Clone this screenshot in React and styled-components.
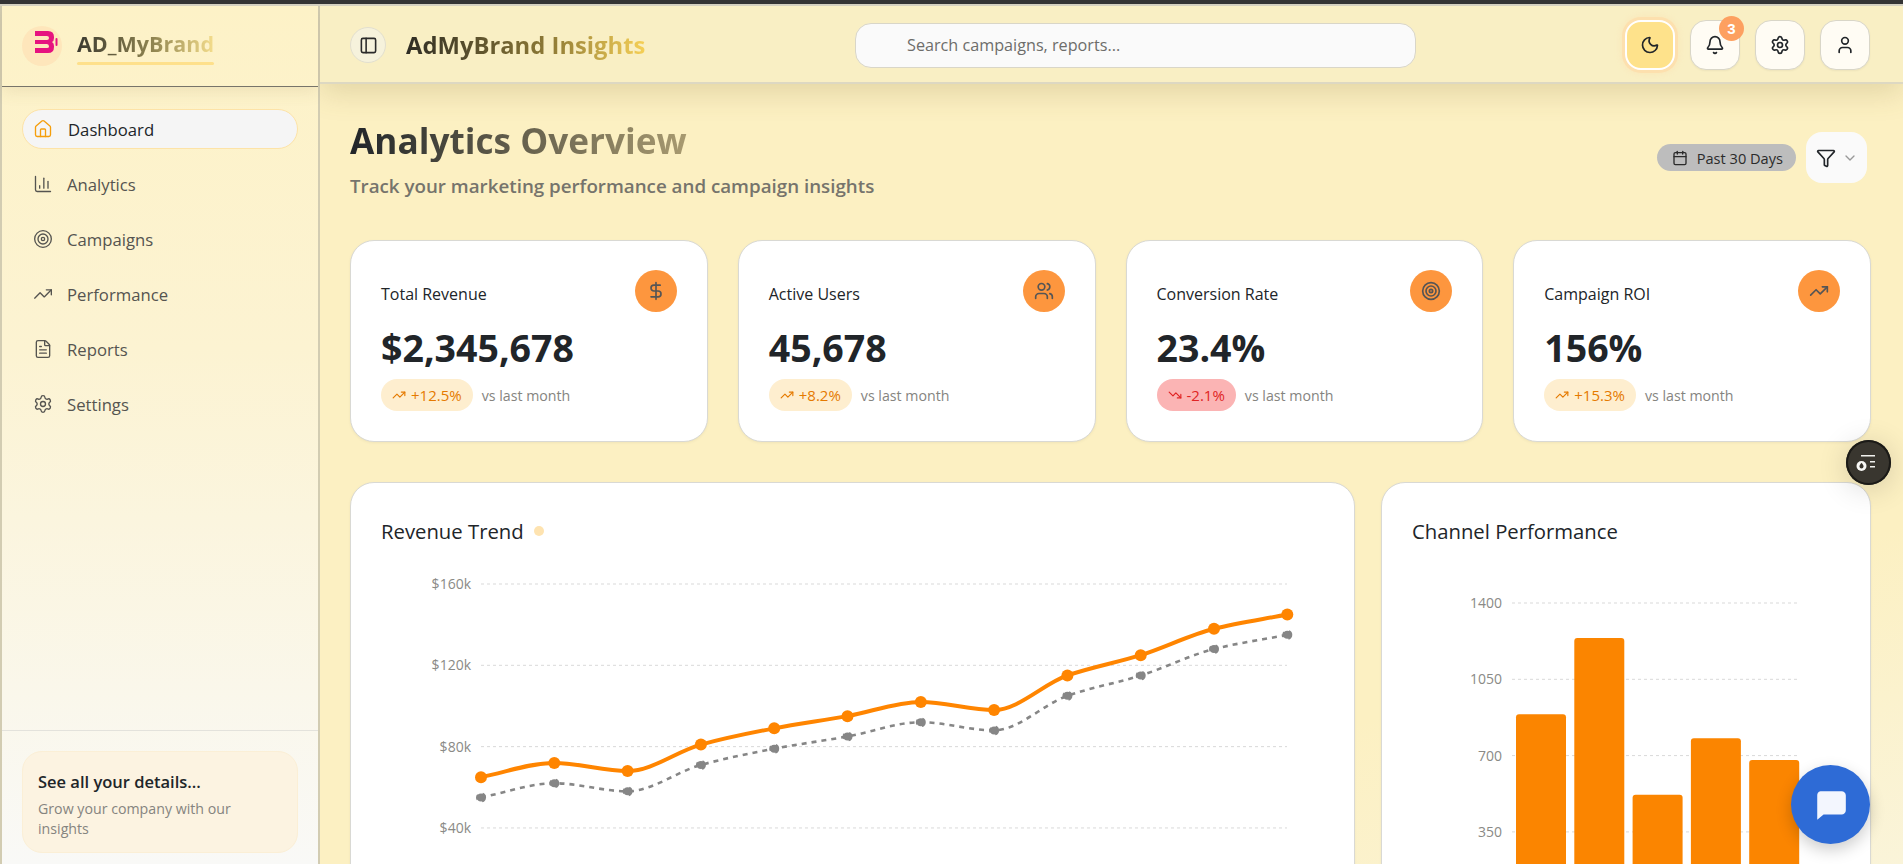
import React from 'react';
import styled, { createGlobalStyle } from 'styled-components';
import {
  Home, BarChart3, Target, TrendingUp, TrendingDown, FileText, Settings, PanelLeft, Moon, Bell,
  User, Calendar, Filter, ChevronDown, DollarSign, Users,
} from 'lucide-react';

const GlobalStyle = createGlobalStyle`
  html, body { margin: 0; padding: 0; height: 100%; overflow: hidden; }
  * { box-sizing: border-box; }
  body { font-family: "Open Sans", "Noto Sans", "Liberation Sans", sans-serif; color: #212529; background: #fcf0c2; }
`;

const TopEdge = styled.div`
  height: 6px;
  background: #343434;
  border-bottom: 2px solid #d4d0c0;
`;

const Shell = styled.div`
  display: flex;
  height: 858px;
  overflow: hidden;
`;

const Sidebar = styled.aside`
  width: 320px;
  flex: none;
  display: flex;
  flex-direction: column;
  border-left: 2px solid #d2ccb2;
  border-right: 2px solid #d2ccb2;
  background: linear-gradient(180deg, #fdf2c7 0%, #fcf3d2 40%, #f9f9f7 100%);
`;

const Brand = styled.div`
  height: 81px;
  flex: none;
  display: flex;
  align-items: center;
  gap: 15px;
  padding: 0 20px;
  border-bottom: 1px solid #77746a;
  box-shadow: 0 4px 16px rgba(120, 100, 40, 0.12);
`;

const LogoMark = styled.div`
  width: 40px;
  height: 40px;
  border-radius: 50%;
  background: #fee6bb;
  display: flex;
  align-items: center;
  justify-content: center;
  overflow: hidden;
`;

const BrandName = styled.div`
  font-size: 21.5px;
  font-weight: 700;
  line-height: 28px;
  padding-bottom: 4px;
  position: relative;
  background: linear-gradient(90deg, #3b3a30 0%, #8f8450 55%, #f4dd8c 100%);
  -webkit-background-clip: text;
  background-clip: text;
  color: transparent;
  &::after {
    content: '';
    position: absolute;
    left: 0;
    right: 0;
    bottom: -3px;
    height: 3px;
    border-radius: 2px;
    background: #fee08b;
  }
`;

const Nav = styled.nav`
  flex: 1;
  display: flex;
  flex-direction: column;
  gap: 15px;
  padding: 22px 20px 0 20px;
`;

const NavItem = styled.a`
  height: 40px;
  display: flex;
  align-items: center;
  gap: ${p => (p.$active ? '15px' : '14px')};
  padding: 0 10px;
  font-size: 16.7px;
  border-radius: 20px;
  color: ${p => (p.$active ? '#212529' : '#555450')};
  background: ${p => (p.$active ? '#f5f5f5' : 'transparent')};
  border: 1px solid ${p => (p.$active ? '#fde3a7' : 'transparent')};
  font-weight: ${p => (p.$active ? 500 : 400)};
  svg { color: ${p => (p.$active ? '#f59e0b' : '#555450')}; flex: none; }
`;

const SideFooter = styled.div`
  flex: none;
  height: 134px;
  border-top: 1px solid #e3e2dc;
  padding: 20px;
`;

const PromoCard = styled.div`
  height: 102px;
  border-radius: 20px;
  padding: 19px 15px;
  background: #fcf3e1;
  border: 1px solid #fbefd6;
`;

const PromoTitle = styled.div`
  font-size: 16.5px;
  font-weight: 600;
  line-height: 22px;
  color: #212529;
`;

const PromoText = styled.div`
  font-size: 14.2px;
  line-height: 20px;
  margin-top: 6px;
  color: #85847f;
`;

const Content = styled.div`
  flex: 1;
  min-width: 0;
  display: flex;
  flex-direction: column;
  overflow: hidden;
`;

const Header = styled.header`
  height: 78px;
  flex: none;
  display: flex;
  align-items: center;
  padding: 2px 33px 0 30px;
  background: #f9efc4;
  border-bottom: 2px solid #ddd8c2;
  box-shadow: 0 8px 30px rgba(120, 100, 40, 0.2);
  position: relative;
`;

const ToggleButton = styled.button`
  width: 36px;
  height: 36px;
  border-radius: 50%;
  border: 1px solid #e2dfcf;
  background: #f6f2dc;
  display: flex;
  align-items: center;
  justify-content: center;
  padding: 0;
  color: #2b2b2b;
`;

const HeaderTitle = styled.h1`
  margin: 0 0 0 20px;
  width: 449px;
  font-size: 23.8px;
  font-weight: 700;
`;

const TitleText = styled.span`
  display: inline-block;
  background: linear-gradient(90deg, #2e2c24 0%, #8e7a36 60%, #f6d056 100%);
  -webkit-background-clip: text;
  background-clip: text;
  color: transparent;
`;

const SearchBox = styled.div`
  width: 561px;
  height: 45px;
  border-radius: 16px;
  border: 1px solid #d9d6c8;
  background: #fafafa;
  padding-left: 51px;
  display: flex;
  align-items: center;
  font-size: 16.2px;
  color: #6d6d6a;
`;

const HeaderActions = styled.div`
  margin-left: auto;
  display: flex;
  align-items: center;
  gap: 15px;
`;

const IconButton = styled.button`
  position: relative;
  width: 50px;
  height: 50px;
  border-radius: 16px;
  display: flex;
  align-items: center;
  justify-content: center;
  padding: 0;
  color: #212529;
  border: ${p => (p.$accent ? '2px solid #fff' : '1px solid #d9d6c8')};
  background: ${p => (p.$accent ? '#fee28b' : '#fffcf4')};
  box-shadow: ${p => (p.$accent ? '0 0 0 3px #fde0ae, 0 0 6px 3px rgba(253,224,174,0.6)' : '0 1px 2px rgba(0,0,0,0.05)')};
`;

const Badge = styled.span`
  position: absolute;
  top: -5px;
  right: -5px;
  width: 25px;
  height: 25px;
  border-radius: 50%;
  background: #fda060;
  color: #fff;
  font-size: 15px;
  font-weight: 700;
  display: flex;
  align-items: center;
  justify-content: center;
`;

const Main = styled.main`
  flex: 1;
  overflow: hidden;
  padding: 30px 32px 0 30px;
  background: linear-gradient(160deg, #fcf0c2 75%, #faf4d9 100%);
`;

const PageHead = styled.div`
  display: flex;
  justify-content: space-between;
  align-items: flex-start;
  height: 86px;
`;

const PageTitle = styled.h2`
  margin: 4px 0 0;
  font-size: 35.2px;
  font-weight: 700;
  line-height: 44px;
  width: max-content;
  background: linear-gradient(90deg, #212529 0%, #a89a70 100%);
  -webkit-background-clip: text;
  background-clip: text;
  color: transparent;
`;

const PageSub = styled.p`
  margin: 11px 0 0;
  font-size: 18.75px;
  line-height: 26px;
  font-weight: 600;
  color: #76746c;
`;

const HeadActions = styled.div`
  display: flex;
  align-items: center;
  gap: 10px;
  margin: 18px 4px 0 0;
`;

const RangePill = styled.div`
  height: 27px;
  display: flex;
  align-items: center;
  gap: 9px;
  padding: 0 13px 0 15px;
  border-radius: 14px;
  background: #bdbdbd;
  font-size: 14.6px;
  font-weight: 500;
  color: #2b2b2b;
`;

const FilterButton = styled.button`
  width: 61px;
  height: 51px;
  border-radius: 16px;
  border: none;
  background: #fafafa;
  display: flex;
  align-items: center;
  justify-content: center;
  gap: 6px;
  padding: 0;
  color: #212529;
`;

const StatGrid = styled.section`
  display: grid;
  grid-template-columns: repeat(4, 1fr);
  gap: 30px;
  margin-top: 40px;
`;

const Card = styled.div`
  background: #fff;
  border: 1px solid #d9d9d4;
  border-radius: 24px;
  box-shadow: 0 1px 3px rgba(0, 0, 0, 0.05);
`;

const StatCard = styled(Card)`
  height: 202px;
  padding: 30px;
`;

const StatTop = styled.div`
  display: flex;
  justify-content: space-between;
  align-items: center;
  margin-top: -1px;
`;

const StatLabel = styled.div`
  font-size: 16px;
  font-weight: 500;
  margin-top: 5px;
  color: #212529;
`;

const StatIcon = styled.div`
  width: 42px;
  height: 42px;
  border-radius: 50%;
  background: #fd963e;
  display: flex;
  align-items: center;
  justify-content: center;
  color: #555;
`;

const StatValue = styled.div`
  margin-top: 10px;
  font-size: 37.5px;
  font-weight: 700;
  line-height: 52px;
  color: #212529;
`;

const StatFoot = styled.div`
  margin-top: 5px;
  display: flex;
  align-items: center;
  gap: 9px;
  font-size: 14.2px;
  color: #85847f;
`;

const Change = styled.span`
  height: 32px;
  display: inline-flex;
  align-items: center;
  gap: 5px;
  padding: 0 11px;
  border-radius: 16px;
  font-size: 15px;
  background: ${p => (p.$down ? '#fbb4b4' : '#feeecf')};
  color: ${p => (p.$down ? '#e02424' : '#e57a00')};
`;

const ChartGrid = styled.section`
  display: grid;
  grid-template-columns: 1005px minmax(0, 1fr);
  gap: 26px;
  margin-top: 40px;
`;

const ChartCard = styled(Card)`
  height: 520px;
  padding: 38px 30px 30px;
`;

const ChartTitle = styled.h3`
  margin: 0;
  font-size: 20.3px;
  font-weight: 500;
  line-height: 20px;
  display: flex;
  align-items: center;
  gap: 10px;
  color: #212529;
`;

const LiveDot = styled.span`
  width: 10px;
  height: 10px;
  border-radius: 50%;
  background: #fee3b0;
`;

const ChartSvg = styled.svg`
  display: block;
  margin-left: -30px;
  overflow: visible;
`;

const ToolDot = styled.button`
  position: fixed;
  top: 440px;
  right: 12px;
  width: 45px;
  height: 45px;
  border-radius: 50%;
  border: none;
  background: #39362f;
  display: flex;
  align-items: center;
  justify-content: center;
  padding: 0;
  box-shadow: inset 0 0 0 2px #1b1a17, 0 4px 30px rgba(0, 0, 0, 0.16);
`;

const ChatButton = styled.button`
  position: fixed;
  top: 765px;
  right: 33px;
  width: 79px;
  height: 79px;
  border-radius: 50%;
  border: none;
  background: #2e6bd6;
  display: flex;
  align-items: center;
  justify-content: center;
  padding: 0;
  box-shadow: 0 6px 16px rgba(0, 0, 0, 0.2);
`;

const navItems = [
  { label: 'Dashboard', icon: Home, active: true },
  { label: 'Analytics', icon: BarChart3 },
  { label: 'Campaigns', icon: Target },
  { label: 'Performance', icon: TrendingUp },
  { label: 'Reports', icon: FileText },
  { label: 'Settings', icon: Settings },
];

const stats = [
  { label: 'Total Revenue', value: '$2,345,678', change: '+12.5%', icon: DollarSign },
  { label: 'Active Users', value: '45,678', change: '+8.2%', icon: Users },
  { label: 'Conversion Rate', value: '23.4%', change: '-2.1%', icon: Target, down: true },
  { label: 'Campaign ROI', value: '156%', change: '+15.3%', icon: TrendingUp },
];

const revenue = [65, 72, 68, 81, 89, 95, 102, 98, 115, 125, 138, 145];
const channels = [890, 1240, 520, 780, 680];

// same curve as a monotone line chart
function monotonePath(pts) {
  const n = pts.length;
  const dx = [], m = [], t = [];
  for (let i = 0; i < n - 1; i++) {
    dx[i] = pts[i + 1][0] - pts[i][0];
    m[i] = (pts[i + 1][1] - pts[i][1]) / dx[i];
  }
  t[0] = m[0];
  t[n - 1] = m[n - 2];
  for (let i = 1; i < n - 1; i++) {
    t[i] = m[i - 1] * m[i] <= 0 ? 0 : (2 * m[i - 1] * m[i]) / (m[i - 1] + m[i]);
  }
  let d = `M${pts[0][0]},${pts[0][1]}`;
  for (let i = 0; i < n - 1; i++) {
    const h = dx[i] / 3;
    d += `C${pts[i][0] + h},${pts[i][1] + h * t[i]} ${pts[i + 1][0] - h},${pts[i + 1][1] - h * t[i + 1]} ${pts[i + 1][0]},${pts[i + 1][1]}`;
  }
  return d;
}

const axisText = { fontSize: 14, fill: '#8a8a86', textAnchor: 'end' };

function RevenueChart() {
  const x = i => 130 + i * 73.3;
  const y = v => 43 + (160 - v) * 2.033;
  const main = revenue.map((v, i) => [x(i), y(v)]);
  const prev = revenue.map((v, i) => [x(i), y(v - 10)]);
  return (
    <ChartSvg width="940" height="400">
      {[160, 120, 80, 40].map(v => (
        <g key={v}>
          <line x1="130" x2="936" y1={y(v)} y2={y(v)} stroke="#d9d9d9" strokeDasharray="3 3" />
          <text x="120" y={y(v) + 5} style={axisText}>${v}k</text>
        </g>
      ))}
      <path d={monotonePath(prev)} fill="none" stroke="#868686" strokeWidth="2.6" strokeDasharray="5 5" />
      {prev.map(([cx, cy]) => (
        <circle key={cx} cx={cx} cy={cy} r="4" fill="#868686" stroke="#868686" strokeWidth="2" strokeDasharray="5 5" />
      ))}
      <path d={monotonePath(main)} fill="none" stroke="#ff8500" strokeWidth="4" />
      {main.map(([cx, cy]) => (
        <circle key={cx} cx={cx} cy={cy} r="6" fill="#ff8500" />
      ))}
    </ChartSvg>
  );
}

function ChannelChart() {
  const y = v => 62 + (1400 - v) * 0.218;
  return (
    <ChartSvg width="430" height="400">
      {[1400, 1050, 700, 350].map(v => (
        <g key={v}>
          <line x1="130" x2="418" y1={y(v)} y2={y(v)} stroke="#d9d9d9" strokeDasharray="3 3" />
          <text x="120" y={y(v) + 5} style={axisText}>{v}</text>
        </g>
      ))}
      {channels.map((v, i) => (
        <path
          key={v}
          d={`M${134 + i * 58.3},${y(0)}V${y(v) + 3}q0,-3 3,-3h44q3,0 3,3V${y(0)}z`}
          fill="#fb8500"
        />
      ))}
    </ChartSvg>
  );
}

export default function App() {
  return (
    <>
      <GlobalStyle />
      <TopEdge />
      <Shell>
        <Sidebar>
          <Brand>
            <LogoMark>
              <svg width="40" height="40" viewBox="0 0 40 40">
                <path d="M13 5H26Q32 5 32 11V12Q32 15 30 16Q32 17 32 20V21Q32 27 26 27H13V22H25Q27 22 27 20.5Q27 18 25 18H13V14H25Q27 14 27 12Q27 10 25 10H13Z" fill="#e6127f" />
                <rect x="33.5" y="12" width="2" height="8" rx="1" fill="#e6127f" />
              </svg>
            </LogoMark>
            <BrandName>AD_MyBrand</BrandName>
          </Brand>
          <Nav>
            {navItems.map(({ label, icon: Icon, active }) => (
              <NavItem key={label} $active={active}>
                <Icon size={20} strokeWidth={1.6} />
                {label}
              </NavItem>
            ))}
          </Nav>
          <SideFooter>
            <PromoCard>
              <PromoTitle>See all your details...</PromoTitle>
              <PromoText>Grow your company with our insights</PromoText>
            </PromoCard>
          </SideFooter>
        </Sidebar>
        <Content>
          <Header>
            <ToggleButton><PanelLeft size={19} /></ToggleButton>
            <HeaderTitle><TitleText>AdMyBrand Insights</TitleText></HeaderTitle>
            <SearchBox>Search campaigns, reports...</SearchBox>
            <HeaderActions>
              <IconButton $accent><Moon size={20} /></IconButton>
              <IconButton>
                <Bell size={20} />
                <Badge>3</Badge>
              </IconButton>
              <IconButton><Settings size={20} /></IconButton>
              <IconButton><User size={20} /></IconButton>
            </HeaderActions>
          </Header>
          <Main>
            <PageHead>
              <div>
                <PageTitle>Analytics Overview</PageTitle>
                <PageSub>Track your marketing performance and campaign insights</PageSub>
              </div>
              <HeadActions>
                <RangePill><Calendar size={16} />Past 30 Days</RangePill>
                <FilterButton>
                  <Filter size={20} />
                  <ChevronDown size={16} color="#999" />
                </FilterButton>
              </HeadActions>
            </PageHead>
            <StatGrid>
              {stats.map(({ label, value, change, icon: Icon, down }) => (
                <StatCard key={label}>
                  <StatTop>
                    <StatLabel>{label}</StatLabel>
                    <StatIcon><Icon size={20} /></StatIcon>
                  </StatTop>
                  <StatValue>{value}</StatValue>
                  <StatFoot>
                    <Change $down={down}>
                      {down ? <TrendingDown size={14} /> : <TrendingUp size={14} />}
                      {change}
                    </Change>
                    vs last month
                  </StatFoot>
                </StatCard>
              ))}
            </StatGrid>
            <ChartGrid>
              <ChartCard>
                <ChartTitle>Revenue Trend<LiveDot /></ChartTitle>
                <RevenueChart />
              </ChartCard>
              <ChartCard>
                <ChartTitle>Channel Performance</ChartTitle>
                <ChannelChart />
              </ChartCard>
            </ChartGrid>
          </Main>
        </Content>
      </Shell>
      <ToolDot>
        <svg width="45" height="45" viewBox="0 0 45 45" fill="none" stroke="#f1f1ee" strokeWidth="1.6">
          <path d="M15 15.7h14M24 21.7h5M24 26.7h5" />
          <circle cx="15.5" cy="26" r="5" fill="#f8f8f6" stroke="none" />
          <path d="M15.5 22.8c1.3 1.6 2 2.6 2 3.6a2 2 0 0 1-4 0c0-1 .7-2 2-3.6z" fill="#39362f" stroke="none" />
        </svg>
      </ToolDot>
      <ChatButton>
        <svg width="36" height="36" viewBox="0 0 34 34">
          <path d="M7 4h20a4 4 0 0 1 4 4v14a4 4 0 0 1-4 4H10l-6 5V8a4 4 0 0 1 3-4z" fill="#f3f6fe" />
        </svg>
      </ChatButton>
    </>
  );
}
